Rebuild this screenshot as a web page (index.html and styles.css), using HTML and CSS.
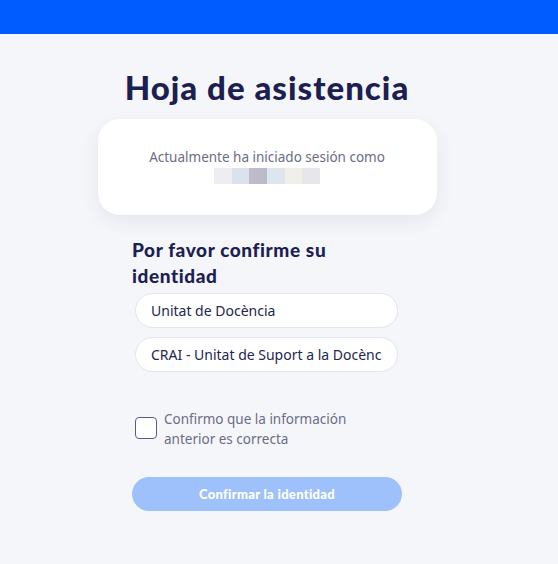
FILE: index.html
```html
<!DOCTYPE html>
<html lang="es">
  <head>
    <meta charset="UTF-8" />
    <meta name="viewport" content="width=device-width, initial-scale=1.0" />
    <title>Hoja de asistencia</title>
    <link rel="stylesheet" href="styles.css">
  </head>
  <body>
    <div class="topbar"></div>

    <main class="page">
      <h1 class="title">Hoja de asistencia</h1>

      <section class="session-card">
        <p>Actualmente ha iniciado sesión como</p>
        <div class="masked-user">
          <span style="background:#eeedf2"></span>
          <span style="background:#dce2ec"></span>
          <span style="background:#bdbbc9"></span>
          <span style="background:#dde5ed"></span>
          <span style="background:#f1f0e8"></span>
          <span style="background:#e7e6eb"></span>
        </div>
      </section>

      <form class="identity">
        <h2>Por favor confirme su identidad</h2>
        <input type="text" class="field" value="Unitat de Docència" readonly />
        <input type="text" class="field" value="CRAI - Unitat de Suport a la Docència" readonly />

        <label class="confirm">
          <input type="checkbox" />
          <span class="box"></span>
          <span>Confirmo que la información anterior es correcta</span>
        </label>

        <button type="submit" class="submit" disabled>Confirmar la identidad</button>
      </form>
    </main>
  </body>
</html>
```

FILE: styles.css
```css
:root {
  --bg-color: #f5f6fa;
  --navy: #1c2050;
  --muted: #6b6d85;
  --blue: #005cff;
}
* {
  margin: 0;
  padding: 0;
  box-sizing: border-box;
}
body {
  font-family: "Noto Sans", "Open Sans", sans-serif;
  background-color: var(--bg-color);
  color: var(--navy);
  height: 564px;
  overflow: hidden;
}
.topbar {
  height: 34px;
  background: var(--blue);
}
.page {
  width: 534px;
  display: flex;
  flex-direction: column;
  align-items: center;
}
.title {
  font-family: Lato, sans-serif;
  font-weight: 900;
  font-size: 33px;
  letter-spacing: 1px;
  margin-top: 33px;
  line-height: 40px;
}
.session-card {
  width: 339px;
  height: 96px;
  margin-top: 12px;
  background: #fff;
  border-radius: 22px;
  box-shadow: 0 6px 18px rgba(40, 50, 90, 0.08);
  display: flex;
  flex-direction: column;
  align-items: center;
  padding-top: 29px;
}
.session-card p {
  font-size: 13.5px;
  color: var(--muted);
  line-height: 18px;
}
.masked-user {
  display: flex;
  margin-top: 2px;
}
.masked-user span {
  width: 17.6px;
  height: 16px;
}
.identity {
  width: 270px;
  margin-top: 22px;
  display: flex;
  flex-direction: column;
}
.identity h2 {
  font-family: Lato, sans-serif;
  font-weight: 900;
  font-size: 19px;
  letter-spacing: 0.6px;
  line-height: 26px;
  width: 230px;
  margin-bottom: 4px;
}
.field {
  width: 263px;
  height: 35px;
  margin-left: 3px;
  margin-bottom: 9px;
  border: 1px solid #e2e5ee;
  border-radius: 18px;
  background: #fff;
  padding: 0 15px;
  font-family: inherit;
  font-size: 14px;
  color: #23264f;
  outline: none;
}
.confirm {
  display: flex;
  align-items: flex-start;
  gap: 7px;
  margin-top: 28px;
  margin-left: 3px;
  font-size: 13.5px;
  line-height: 20px;
  color: var(--muted);
  width: 230px;
}
.confirm input {
  display: none;
}
.confirm .box {
  flex: none;
  width: 22px;
  height: 22px;
  margin-top: 8px;
  border: 1.5px solid #5c5a80;
  border-radius: 4px;
  background: #fff;
}
.submit {
  margin-top: 28px;
  height: 34px;
  border: none;
  border-radius: 17px;
  background: #9fc1fb;
  color: #fff;
  font-family: Lato, sans-serif;
  font-weight: 900;
  font-size: 13px;
  letter-spacing: 0.3px;
}
```
